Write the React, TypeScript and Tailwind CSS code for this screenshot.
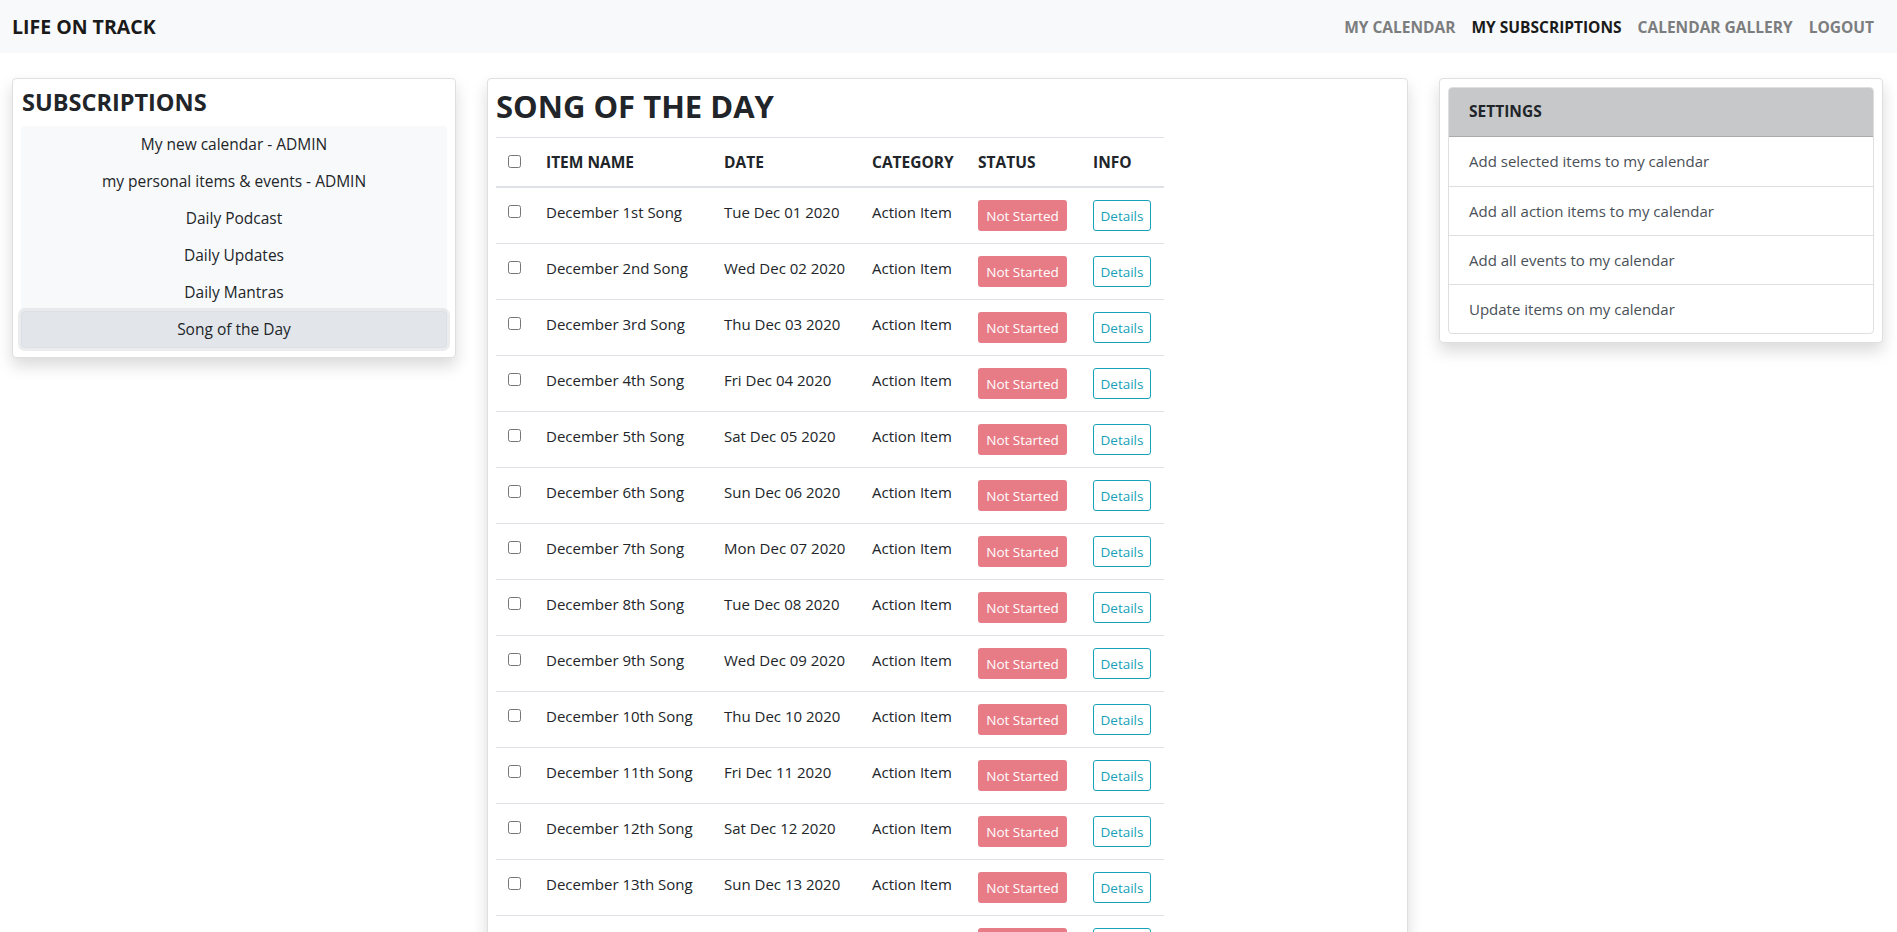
import React from "react";

const navLinks = [
  { label: "My Calendar", active: false },
  { label: "My Subscriptions", active: true },
  { label: "Calendar Gallery", active: false },
  { label: "Logout", active: false },
];

const subscriptions = [
  "My new calendar - ADMIN",
  "my personal items & events - ADMIN",
  "Daily Podcast",
  "Daily Updates",
  "Daily Mantras",
  "Song of the Day",
];

const settings = [
  "Add selected items to my calendar",
  "Add all action items to my calendar",
  "Add all events to my calendar",
  "Update items on my calendar",
];

function ordinal(n: number) {
  const rest = n % 100;
  if (rest >= 11 && rest <= 13) return `${n}th`;
  if (n % 10 === 1) return `${n}st`;
  if (n % 10 === 2) return `${n}nd`;
  if (n % 10 === 3) return `${n}rd`;
  return `${n}th`;
}

const songs = Array.from({ length: 31 }, (_, i) => ({
  id: i + 1,
  name: `December ${ordinal(i + 1)} Song`,
  date: new Date(2020, 11, i + 1).toDateString(),
  category: "Action Item",
}));

function Navbar() {
  return (
    <nav className="h-[53px] bg-[#f8f9fa] flex items-center justify-between pl-[12px] pr-[15px]">
      <a href="#" className="text-[19.5px] font-bold text-[#1a1a1a] leading-[30px]">
        LIFE ON TRACK
      </a>
      <ul className="flex items-center">
        {navLinks.map((link) => (
          <li key={link.label}>
            <a href="#" className={`block px-[8px] leading-[24px] text-[15.5px] font-bold uppercase ${link.active ? "text-[#1a1a1a]" : "text-[#7c7d7e]"}`}>
              {link.label}
            </a>
          </li>
        ))}
      </ul>
    </nav>
  );
}

function SubscriptionsCard() {
  return (
    <div className="w-[444px] shrink-0 bg-white border border-[#dfdfdf] rounded-[4px] shadow-[0_8px_16px_rgba(0,0,0,0.15)] pt-[8px] px-[8px] pb-[9px]">
      <h4 className="text-[23.5px] font-bold leading-[30px] text-[#212529] mb-[9px] pl-[1px]">SUBSCRIPTIONS</h4>
      <div className="bg-[#f8f9fa] rounded-[4px]">
        {subscriptions.map((name, i) =>
          i === subscriptions.length - 1 ? (
            <button key={name} className="w-full h-[37px] flex items-center justify-center text-[15.5px] text-[#212529] bg-[#e2e6ea] border border-[#dae0e5] rounded-[4px] shadow-[0_0_0_3px_rgba(216,217,219,0.5)]">
              {name}
            </button>
          ) : (
            <button key={name} className="w-full h-[37px] flex items-center justify-center text-[15.5px] text-[#212529]">
              {name}
            </button>
          )
        )}
      </div>
    </div>
  );
}

function SongTable() {
  return (
    <div className="w-[921px] shrink-0 bg-white border border-[#dfdfdf] rounded-[4px] shadow-[0_8px_16px_rgba(0,0,0,0.15)] p-[8px]">
      <h2 className="text-[31px] font-bold leading-[38px] text-[#212529] mb-[12px]">SONG OF THE DAY</h2>
      <table className="w-[668px] table-fixed border-collapse text-[#212529]">
        <colgroup>
          <col className="w-[38px]" />
          <col className="w-[178px]" />
          <col className="w-[148px]" />
          <col className="w-[106px]" />
          <col className="w-[115px]" />
          <col className="w-[83px]" />
        </colgroup>
        <thead>
          <tr className="text-left text-[15.5px] font-bold leading-[24px]">
            <th className="p-[12px] align-bottom border-t border-b-2 border-[#dee2e6]">
              <input type="checkbox" className="block m-0 mb-[6px] w-[13px] h-[13px]" />
            </th>
            <th className="p-[12px] align-bottom border-t border-b-2 border-[#dee2e6]">ITEM NAME</th>
            <th className="p-[12px] align-bottom border-t border-b-2 border-[#dee2e6]">DATE</th>
            <th className="p-[12px] align-bottom border-t border-b-2 border-[#dee2e6]">CATEGORY</th>
            <th className="p-[12px] align-bottom border-t border-b-2 border-[#dee2e6]">STATUS</th>
            <th className="p-[12px] align-bottom border-t border-b-2 border-[#dee2e6]">INFO</th>
          </tr>
        </thead>
        <tbody>
          {songs.map((song) => (
            <tr key={song.id} className="text-[15px] leading-[24px]">
              <td className="p-[12px] align-top border-t border-[#dee2e6]">
                <input type="checkbox" className="block m-0 mt-[5px] w-[13px] h-[13px]" />
              </td>
              <td className="p-[12px] align-top border-t border-[#dee2e6] whitespace-nowrap">{song.name}</td>
              <td className="p-[12px] align-top border-t border-[#dee2e6] whitespace-nowrap">{song.date}</td>
              <td className="p-[12px] align-top border-t border-[#dee2e6] whitespace-nowrap">{song.category}</td>
              <td className="p-[12px] align-top border-t border-[#dee2e6]">
                <span className="flex items-center justify-center w-[89px] h-[31px] rounded-[3px] bg-[#e87c86] text-white text-[13.5px]">Not Started</span>
              </td>
              <td className="p-[12px] align-top border-t border-[#dee2e6]">
                <button className="flex items-center justify-center w-[58px] h-[31px] rounded-[3px] border border-[#17a2b8] text-[#17a2b8] text-[13.5px]">Details</button>
              </td>
            </tr>
          ))}
        </tbody>
      </table>
    </div>
  );
}

function SettingsCard() {
  return (
    <div className="w-[444px] shrink-0 bg-white border border-[#dfdfdf] rounded-[4px] shadow-[0_8px_16px_rgba(0,0,0,0.15)] p-[8px]">
      <div className="border border-[#dfdfdf] rounded-[4px] overflow-hidden">
        <div className="h-[49px] px-[20px] flex items-center bg-[#c6c8ca] border-b border-[#a9abad] text-[15.5px] font-bold text-[#212529]">SETTINGS</div>
        {settings.map((item, i) => (
          <a key={item} href="#" className={`h-[49px] px-[20px] flex items-center text-[15px] text-[#495057] ${i > 0 ? "border-t border-[#dfdfdf]" : ""}`}>
            {item}
          </a>
        ))}
      </div>
    </div>
  );
}

export default function App() {
  return (
    <div className="h-[932px] overflow-hidden bg-white font-['Open_Sans',sans-serif]">
      <Navbar />
      <main className="flex items-start gap-[31px] pt-[25px] pl-[12px]">
        <SubscriptionsCard />
        <SongTable />
        <SettingsCard />
      </main>
    </div>
  );
}
